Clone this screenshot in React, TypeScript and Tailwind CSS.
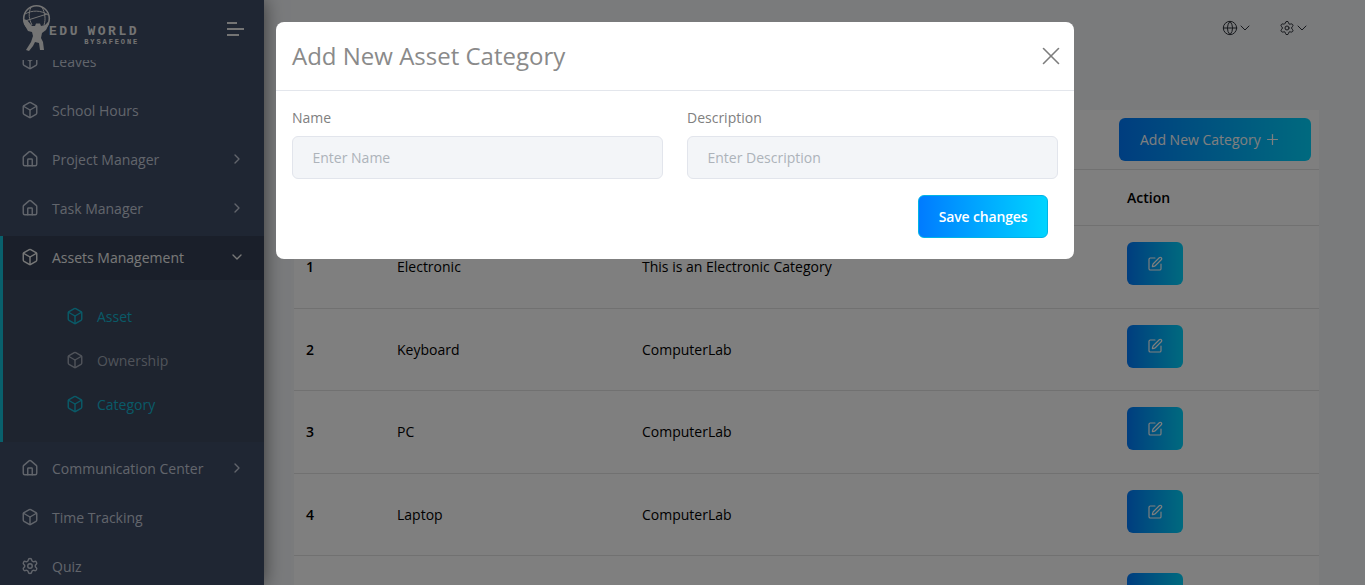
import { FC, ReactNode } from "react";
import { Box, ChevronDown, ChevronRight, Globe, House, Plus, Settings, SquarePen, X } from "lucide-react";

const font = { fontFamily: '"Open Sans", sans-serif' };

const rows = [
  { id: 1, name: "Electronic", description: "This is an Electronic Category" },
  { id: 2, name: "Keyboard", description: "ComputerLab" },
  { id: 3, name: "PC", description: "ComputerLab" },
  { id: 4, name: "Laptop", description: "ComputerLab" },
  { id: 5, name: "", description: "" },
];

const MenuRow: FC<{ icon: ReactNode; label: string; arrow?: boolean }> = ({ icon, label, arrow }) => (
  <div className="flex items-center h-[49px] pl-[21px] pr-[19.5px] text-[14px] text-[#c4cbd8]">
    <span className="w-[31px] shrink-0">{icon}</span>
    <span className="flex-1">{label}</span>
    {arrow && <ChevronRight size={16} strokeWidth={2} />}
  </div>
);

const SubRow: FC<{ label: string; active?: boolean }> = ({ label, active }) => (
  <div className={`flex items-center h-[44px] pl-[66px] text-[14px] ${active ? "text-[#13b5d0]" : "text-[#a0a7b4]"}`}>
    <span className="w-[31px] shrink-0">
      <Box size={18} strokeWidth={1.9} />
    </span>
    {label}
  </div>
);

const Logo: FC = () => (
  <div className="flex items-start">
    <svg width="52" height="50" viewBox="0 0 52 50" className="shrink-0" fill="none">
      <circle cx="14.5" cy="14.5" r="12.8" stroke="#e8e8e8" strokeWidth="1.6" />
      <path d="M3 10c7-4 16-4 23 1M9 3c-3 7-2 12 1 18M20 3c3 6 4 12 2 18M3 17l22-7" stroke="#e8e8e8" strokeWidth="1" />
      <path d="M1 15l4 1 5 6 3 0 1-2.500 4 0 1 2.500 4-1 3-3 1 2-3 6-4 3-1 5 2 4 1 8-4 0-1-7-4-1-2 4-4 5-3-1 5-8 2-6-1-4-4-1-4-7z" fill="#e8e8e8" />
    </svg>
    <div className="-ml-[25px] mt-[22px] flex flex-col items-end font-bold text-[#e8e8e8]" style={{ fontFamily: '"Liberation Mono", monospace' }}>
      <span className="text-[13px] leading-[12px] tracking-[2.55px] [word-spacing:-3px] -mr-[2px] whitespace-nowrap">EDU WORLD</span>
      <span className="text-[7px] leading-[8px] tracking-[1.9px] -mr-[2px] whitespace-nowrap">BYSAFEONE</span>
    </div>
  </div>
);

const Sidebar: FC = () => (
  <aside className="relative z-10 w-[264px] h-[585px] shrink-0 bg-[#3e4c66] overflow-hidden shadow-[0_0_18px_rgba(0,0,0,0.55)]">
    <div className="relative z-10 flex items-start justify-between h-[60px] bg-[#3e4c66] pl-[22px] pr-[20px] pt-[4px]">
      <Logo />
      <div className="flex flex-col items-start gap-[4px] mt-[18px]">
        <span className="w-[10px] h-[2px] bg-[#e8e8e8]" />
        <span className="w-[17px] h-[2px] bg-[#e8e8e8]" />
        <span className="w-[12px] h-[2px] bg-[#e8e8e8]" />
      </div>
    </div>
    <div className="-mt-[23.5px]">
      <MenuRow icon={<Box size={18} strokeWidth={1.9} />} label="Leaves" />
      <MenuRow icon={<Box size={18} strokeWidth={1.9} />} label="School Hours" />
      <MenuRow icon={<House size={18} strokeWidth={1.9} />} label="Project Manager" arrow />
      <MenuRow icon={<House size={18} strokeWidth={1.9} />} label="Task Manager" arrow />
      <div className="mt-[3.5px] border-l-[3px] border-[#13c0d8] bg-[#3c485e] h-[206px]">
        <div className="flex items-center h-[44px] pb-[2px] pl-[18px] pr-[19.5px] bg-[#343f54] text-[14px] text-[#f0f0f0]">
          <span className="w-[31px] shrink-0">
            <Box size={18} strokeWidth={1.9} />
          </span>
          <span className="flex-1">Assets Management</span>
          <ChevronDown size={16} strokeWidth={2} />
        </div>
        <div className="pt-[14px] -ml-[3px]">
          <SubRow label="Asset" active />
          <SubRow label="Ownership" />
          <SubRow label="Category" active />
        </div>
      </div>
      <div className="mt-[1.5px]">
        <MenuRow icon={<House size={18} strokeWidth={1.9} />} label="Communication Center" arrow />
        <MenuRow icon={<Box size={18} strokeWidth={1.9} />} label="Time Tracking" />
        <MenuRow icon={<Settings size={18} strokeWidth={1.9} />} label="Quiz" />
      </div>
    </div>
  </aside>
);

const Main: FC = () => (
  <main className="flex-1 min-w-0 h-[585px] overflow-hidden">
    <div className="flex justify-end items-center h-[56px] pr-[55px] gap-[26px] text-[#2f333a]">
      <div className="flex items-center">
        <Globe size={16} strokeWidth={1.5} />
        <ChevronDown size={16} strokeWidth={1.5} className="-ml-[1px]" />
      </div>
      <div className="flex items-center">
        <Settings size={16} strokeWidth={1.5} />
        <ChevronDown size={16} strokeWidth={1.5} className="-ml-[1px]" />
      </div>
    </div>
    <section className="mt-[54px] ml-[30px] w-[1025px] bg-white text-[14px] text-black">
      <div className="flex justify-end h-[60px] pt-[8px] pr-[8px] border-b border-[#e3e3e3]">
        <button className="flex items-center gap-[3px] w-[192px] h-[43px] pl-[21px] rounded-[6px] bg-gradient-to-r from-[#007bff] to-[#00d4ff] text-white">
          Add New Category
          <Plus size={17} strokeWidth={1.75} />
        </button>
      </div>
      <div className="grid grid-cols-[91px_245px_485px_1fr] pl-[12px] items-center h-[56px] border-b border-[#e3e3e3] font-semibold">
        <span>#</span>
        <span>Name</span>
        <span>Description</span>
        <span>Action</span>
      </div>
      {rows.map((row) => (
        <div key={row.id} className="grid grid-cols-[91px_245px_485px_1fr] pl-[12px] items-center h-[82.6px] border-b border-[#e3e3e3]">
          <span className="font-semibold">{row.name ? row.id : ""}</span>
          <span>{row.name}</span>
          <span>{row.description}</span>
          <span className="flex items-center justify-center w-[56px] h-[43px] mb-[6px] rounded-[6px] bg-gradient-to-r from-[#007bff] to-[#00d4ff] text-white">
            <SquarePen size={16} strokeWidth={1.75} />
          </span>
        </div>
      ))}
    </section>
  </main>
);

const Modal: FC = () => (
  <div className="absolute inset-0 z-20 bg-black/50">
    <div className="mt-[22px] ml-[276px] w-[798px] h-[237px] rounded-[8px] bg-white">
      <div className="flex items-center justify-between h-[69px] pl-[16px] pr-[8px] border-b border-[#e3e6ec]">
        <h2 className="text-[24px] text-[#8a8a8a]">Add New Asset Category</h2>
        <X size={30} strokeWidth={1.3} className="text-[#7d7d7d]" />
      </div>
      <div className="grid grid-cols-2 gap-x-[24px] px-[16px] pt-[17px] text-[14px] text-[#808080]">
        <label className="flex flex-col gap-[9px]">
          <span className="leading-[19px]">Name</span>
          <input placeholder="Enter Name" className="h-[43px] px-[19.5px] rounded-[6px] border border-[#e2e5ec] bg-[#f3f5f8] outline-none placeholder:text-[#adb3ba]" />
        </label>
        <label className="flex flex-col gap-[9px]">
          <span className="leading-[19px]">Description</span>
          <input placeholder="Enter Description" className="h-[43px] px-[19.5px] rounded-[6px] border border-[#e2e5ec] bg-[#f3f5f8] outline-none placeholder:text-[#adb3ba]" />
        </label>
      </div>
      <div className="flex justify-end pr-[26px] pt-[16px]">
        <button className="w-[130px] h-[43px] rounded-[6px] border border-[#00b4e6] bg-gradient-to-r from-[#007bff] to-[#00d4ff] text-[14px] font-semibold tracking-[-0.15px] text-white">
          Save changes
        </button>
      </div>
    </div>
  </div>
);

const App: FC = () => (
  <div className="relative flex w-[1365px] h-[585px] overflow-hidden bg-[#f4f6f9]" style={font}>
    <Sidebar />
    <Main />
    <Modal />
  </div>
);

export default App;
